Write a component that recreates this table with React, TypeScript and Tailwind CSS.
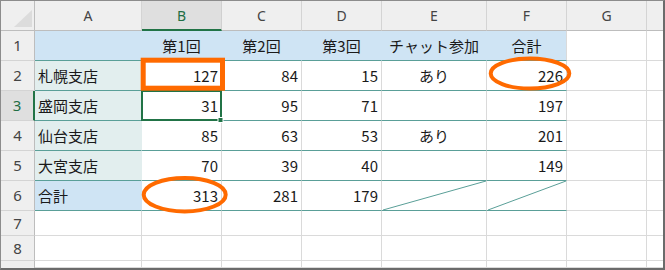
import React from 'react';

const COLS = ['A', 'B', 'C', 'D', 'E', 'F', 'G', ''];
const ROW_NUMS = ['1', '2', '3', '4', '5', '6', '7', '8', '9'];

type Align = 'left' | 'right' | 'center';

interface CellSpec {
  text?: string;
  align?: Align;
  bg?: string; // full bg class
  br?: string; // full border-right class
  bb?: string; // full border-bottom class
}

const GRID_R = 'border-r border-r-[#dadada]';
const GRID_B = 'border-b border-b-[#dadada]';
const TEAL_B = 'border-b border-b-[#5a9f98]';
const BLUE_BG = 'bg-[#cfe4f4]';
const BLUE_R = 'border-r border-r-[#cfe4f4]';
const SIDE_BG = 'bg-[#e2eeee]';
const SIDE_R = 'border-r border-r-[#e2eeee]';

const branches = ['札幌支店', '盛岡支店', '仙台支店', '大宮支店'];
const values = [
  ['127', '84', '15', 'あり', '226'],
  ['31', '95', '71', '', '197'],
  ['85', '63', '53', 'あり', '201'],
  ['70', '39', '40', '', '149'],
];

// build the table rows (rows 1..9), each with 8 cells (A..H)
const buildRows = (): CellSpec[][] => {
  const rows: CellSpec[][] = [];
  const heads = ['', '第1回', '第2回', '第3回', 'チャット参加', '合計'];
  rows.push([
    ...heads.map((h, i) => ({
      text: h,
      align: 'center' as Align,
      bg: BLUE_BG,
      br: i < 5 ? BLUE_R : GRID_R,
      bb: TEAL_B,
    })),
    { br: GRID_R, bb: GRID_B },
    { bb: GRID_B },
  ]);
  branches.forEach((name, r) => {
    rows.push([
      { text: name, align: 'left', bg: SIDE_BG, br: SIDE_R, bb: TEAL_B },
      ...values[r].map((v, i) => ({
        text: v,
        align: (i === 3 ? 'center' : 'right') as Align,
        br: GRID_R,
        bb: TEAL_B,
      })),
      { br: GRID_R, bb: GRID_B },
      { bb: GRID_B },
    ]);
  });
  rows.push([
    { text: '合計', align: 'left', bg: BLUE_BG, br: BLUE_R, bb: TEAL_B },
    { text: '313', align: 'right', br: GRID_R, bb: TEAL_B },
    { text: '281', align: 'right', br: GRID_R, bb: TEAL_B },
    { text: '179', align: 'right', br: GRID_R, bb: TEAL_B },
    { br: GRID_R, bb: TEAL_B },
    { br: GRID_R, bb: TEAL_B },
    { br: GRID_R, bb: GRID_B },
    { bb: GRID_B },
  ]);
  for (let r = 0; r < 3; r++) {
    rows.push([
      ...Array.from({ length: 7 }, () => ({ br: GRID_R, bb: GRID_B })),
      { bb: GRID_B },
    ]);
  }
  return rows;
};

const alignClass = (a?: Align) =>
  a === 'right' ? 'justify-end pr-[3px]' : a === 'center' ? 'justify-center' : 'justify-start pl-[3px]';

export default function App() {
  const rows = buildRows();

  return (
    <div className="relative w-[665px] h-[270px] bg-white overflow-hidden">
      <div
        className="w-full h-full border-l border-t border-l-[#8c8c8c] border-t-[#8c8c8c] border-r-2 border-b-2 border-r-[#6b6b6b] border-b-[#6b6b6b] grid grid-cols-[34px_107px_80px_80px_80px_105px_80px_80px_1fr] grid-rows-[30px_30px_30px_30px_30px_30px_30px_25px_25px_1fr] text-[#1a1a1a]"
        style={{ fontFamily: '"Noto Sans CJK JP", "Noto Sans", sans-serif' }}
      >
        {/* corner */}
        <div className="bg-[#efefef] border-r border-b border-r-[#bdbdbd] border-b-[#bdbdbd] flex items-end justify-end pr-[2px] pb-[3px]">
          <svg width="18" height="17" viewBox="0 0 18 17">
            <polygon points="0,17 18,0 18,17" fill="#dcdcdc" />
          </svg>
        </div>
        {/* column headers */}
        {COLS.map((c, i) =>
          c === 'B' ? (
            <div
              key={c}
              className="bg-[#dfdfdf] border-r border-r-[#d0d0d0] border-b-2 border-b-[#217346] flex items-center justify-center text-[14px] text-[#1f6e45] font-['Noto_Sans']"
            >
              {c}
            </div>
          ) : i < COLS.length - 1 ? (
            <div
              key={`col-${i}`}
              className="bg-[#efefef] border-b border-b-[#bdbdbd] border-r border-r-[#d4d4d4] flex items-center justify-center text-[14px] text-[#444] font-['Noto_Sans']"
            >
              {c}
            </div>
          ) : (
            <div key={`col-${i}`} className="bg-[#efefef] border-b border-b-[#bdbdbd]" />
          )
        )}
        {/* body rows */}
        {rows.map((cells, r) => (
          <React.Fragment key={`row-${r}`}>
            {r === 2 ? (
              <div className="bg-[#dfdfdf] border-r-2 border-r-[#217346] border-b border-b-[#d4d4d4] flex items-center justify-center text-[15px] text-[#1f6e45] font-['Noto_Sans']">
                {ROW_NUMS[r]}
              </div>
            ) : r === 8 ? (
              <div className="bg-[#efefef] border-r border-r-[#bdbdbd] flex items-start justify-center pt-[1px] text-[15px] leading-[20px] text-[#444] font-['Noto_Sans'] overflow-hidden">
                {ROW_NUMS[r]}
              </div>
            ) : (
              <div className="bg-[#efefef] border-r border-r-[#bdbdbd] border-b border-b-[#d4d4d4] flex items-center justify-center text-[15px] text-[#444] font-['Noto_Sans']">
                {ROW_NUMS[r]}
              </div>
            )}
            {cells.map((cell, i) => (
              <div
                key={`c-${r}-${i}`}
                className={`flex items-center leading-none text-[15px] ${alignClass(cell.align)} ${cell.bg ?? ''} ${cell.br ?? ''} ${cell.bb ?? ''}`}
              >
                {cell.text}
              </div>
            ))}
          </React.Fragment>
        ))}
      </div>

      {/* annotations drawn over the sheet */}
      <svg className="absolute left-0 top-0 pointer-events-none" width="665" height="270" viewBox="0 0 665 270">
        {/* diagonal strikes in E6 / F6 */}
        <line x1="383" y1="210" x2="486" y2="181" stroke="#5a9f98" strokeWidth="1" />
        <line x1="488" y1="210" x2="566" y2="181" stroke="#5a9f98" strokeWidth="1" />
        {/* active cell B3 */}
        <rect x="142" y="91" width="79" height="29" fill="none" stroke="#217346" strokeWidth="2" />
        <rect x="218" y="117.5" width="5" height="5" fill="#217346" stroke="#fff" strokeWidth="1" />
        {/* orange highlight box on B2 */}
        <rect x="143.2" y="60.2" width="79.3" height="28" fill="none" stroke="#ff6a00" strokeWidth="5" />
        {/* orange circles */}
        <ellipse cx="530" cy="73.5" rx="39.3" ry="15" fill="none" stroke="#ff6a00" strokeWidth="4" />
        <ellipse cx="184.7" cy="194.7" rx="41" ry="16.7" fill="none" stroke="#ff6a00" strokeWidth="4" />
      </svg>
    </div>
  );
}
